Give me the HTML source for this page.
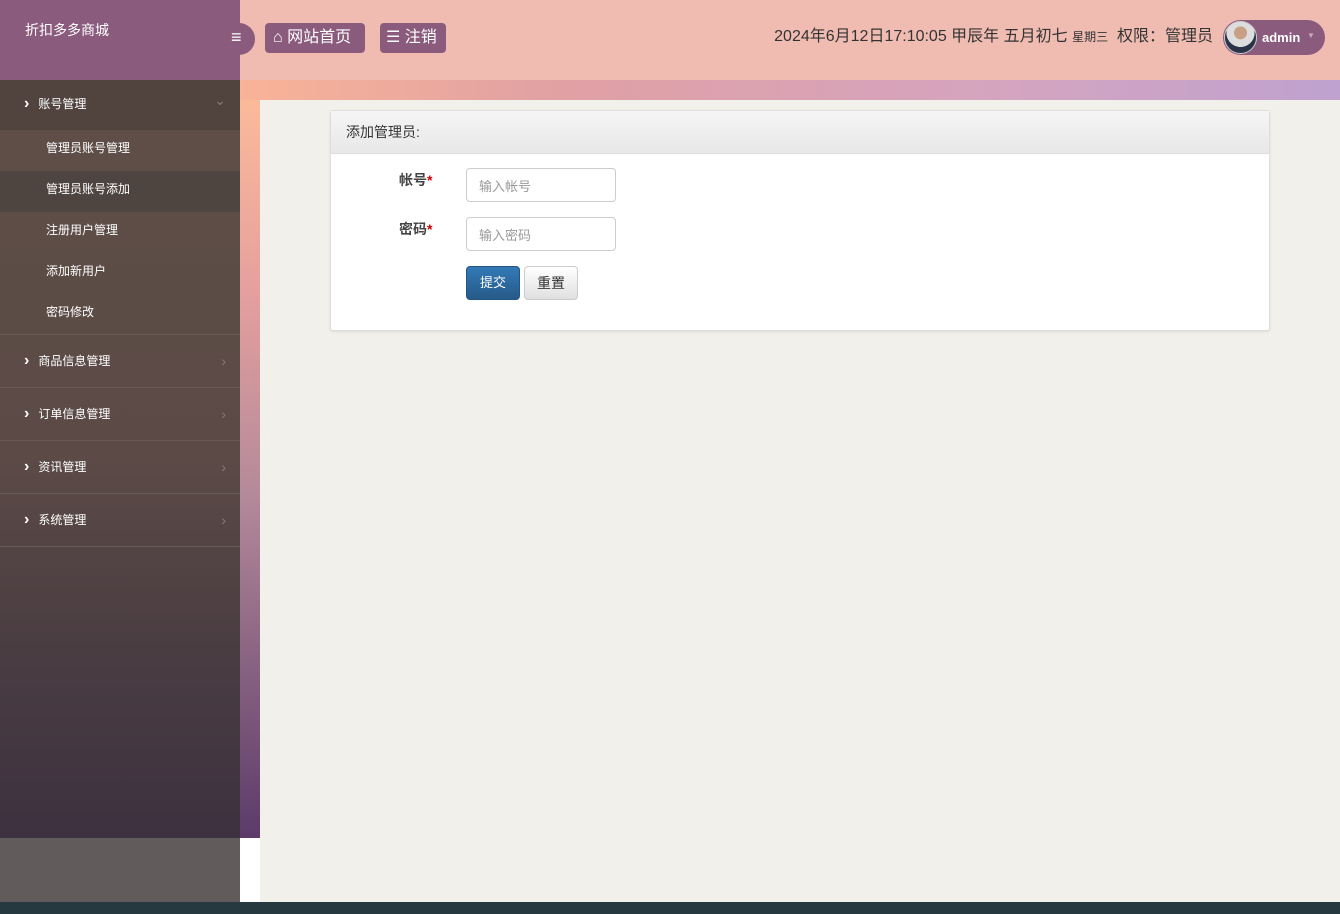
<!DOCTYPE html>
<html><head><meta charset="utf-8"><style>
*{margin:0;padding:0;box-sizing:border-box}
body{width:1340px;height:914px;overflow:hidden;position:relative;background:#f1f0ea;font-family:"Liberation Sans","Noto Sans CJK SC",sans-serif}
.bg{position:absolute;left:240px;top:80px;width:1100px;height:822px;background:linear-gradient(180deg,#fdbd9a 0%,#e6a09e 25%,#b58a9a 50%,#5c3b6a 92%,#5c3b6a 100%)}
.bgtop{position:absolute;left:240px;top:80px;width:1100px;height:20px;background:linear-gradient(90deg,#f9b397,#e0a0a4 30%,#d4a4c0 70%,#bfa2cf)}
.white{position:absolute;left:240px;top:838px;width:20px;height:64px;background:#fff}
.main{position:absolute;left:260px;top:100px;width:1080px;height:802px;background:#f1f0ea}
.top{position:absolute;left:0;top:0;width:1340px;height:80px;background:#f0bcb2}
.logo{position:absolute;left:0;top:0;width:240px;height:80px;background:#8a5b7c;color:#fff;font-size:14px;padding:20px 25px}
.tog{position:absolute;left:222px;top:23px;width:33px;height:32px;border-radius:0 16px 16px 0;background:#8a5b7c;color:#fff;font-size:18px;font-weight:bold;padding:4px 0 0 9px}
.btn{position:absolute;top:23px;height:30px;background:#8a5b7c;color:#fff;border-radius:4px;font-size:16px;line-height:30px;padding:0 8px}
.date{position:absolute;right:127px;top:27px;font-size:16px;color:#333;line-height:20px}
.user{position:absolute;left:1223px;top:20px;width:102px;height:35px;border-radius:18px;background:#8a5b7c;color:#fff;font-size:13px;font-weight:bold}
.av{position:absolute;left:1px;top:1px;width:33px;height:33px;border-radius:50%;background:radial-gradient(circle at 50% 35%,#c99f86 0 25%,#ddd 26% 55%,#2b3347 56%);border:1px solid #ccc}
.side{position:absolute;left:0;top:80px;width:240px;height:758px;background:linear-gradient(180deg,#5e4f47 0%,#5b4a46 50%,#4a3d42 75%,#3d3140 100%)}
.sidebot{position:absolute;left:0;top:838px;width:240px;height:64px;background:#615c5b}
.task{position:absolute;left:0;top:902px;width:1340px;height:12px;background:#263940}
.h{height:53px;border-bottom:1px solid #6b5a55;color:#fff;font-size:12px;line-height:52px;padding-left:24px;position:relative}
.h:before{content:"›";font-weight:bold;font-size:16px;margin-right:9px}
.h:after{content:"›";position:absolute;right:14px;color:#8a7a75;font-size:14px}
.h0{height:50px;background:#51443f;border:0;line-height:48px}
.h0:after{content:"⌄";top:-4px}
.s{height:41px;color:#fff;font-size:12px;line-height:36px;padding-left:46px}
.act{background:#4f4540}
.card{position:absolute;left:330px;top:110px;width:940px;height:221px;background:#fff;border:1px solid #ddd;border-radius:3px;box-shadow:0 1px 2px rgba(0,0,0,.08)}
.ch{height:43px;background:linear-gradient(#f5f5f5,#e8e8e8);border-bottom:1px solid #ddd;font-size:14px;color:#333;padding:11px 15px}
.lbl{position:absolute;left:68px;font-size:14px;font-weight:bold;color:#444}
.lbl b{color:#c00}
.in{position:absolute;left:135px;width:150px;height:34px;border:1px solid #ccc;border-radius:4px;font-size:13px;color:#999;padding:7px 12px}
.b1{position:absolute;left:135px;top:155px;width:54px;height:34px;border-radius:4px;background:linear-gradient(#337ab7,#265a88);border:1px solid #245580;color:#fff;font-size:13px;text-align:center;line-height:32px}
.b2{position:absolute;left:193px;top:155px;width:54px;height:34px;border-radius:4px;background:linear-gradient(#fff,#e0e0e0);border:1px solid #ccc;color:#333;font-size:14px;text-align:center;line-height:32px}
</style></head><body>
<div class="bg"></div><div class="bgtop"></div><div class="white"></div><div class="main"></div>
<div class="top"></div>
<div class="logo">折扣多多商城</div>
<div class="tog">≡</div>
<div class="btn" style="left:265px;width:100px">⌂ 网站首页</div>
<div class="btn" style="left:380px;width:66px;padding:0 6px">☰ 注销</div>
<div class="date">2024年6月12日17:10:05 甲辰年 五月初七 <span style="font-size:12px">星期三</span>&nbsp; 权限：管理员</div>
<div class="user"><div class="av"></div><span style="position:absolute;left:39px;top:10px">admin</span><span style="position:absolute;left:84px;top:11px;color:#c9a9bd;font-size:8px">▼</span></div>
<div class="side">
<div class="h h0">账号管理</div>
<div class="s">管理员账号管理</div>
<div class="s act">管理员账号添加</div>
<div class="s">注册用户管理</div>
<div class="s">添加新用户</div>
<div class="s" style="border-bottom:1px solid #6b5a55">密码修改</div>
<div class="h">商品信息管理</div>
<div class="h">订单信息管理</div>
<div class="h">资讯管理</div>
<div class="h">系统管理</div>
</div>
<div class="sidebot"></div>
<div class="card">
<div class="ch">添加管理员:</div>
<div class="lbl" style="top:59px">帐号<b>*</b></div>
<div class="in" style="top:57px">输入帐号</div>
<div class="lbl" style="top:108px">密码<b>*</b></div>
<div class="in" style="top:106px">输入密码</div>
<div class="b1">提交</div><div class="b2">重置</div>
</div>
<div class="task"></div>
</body></html>
